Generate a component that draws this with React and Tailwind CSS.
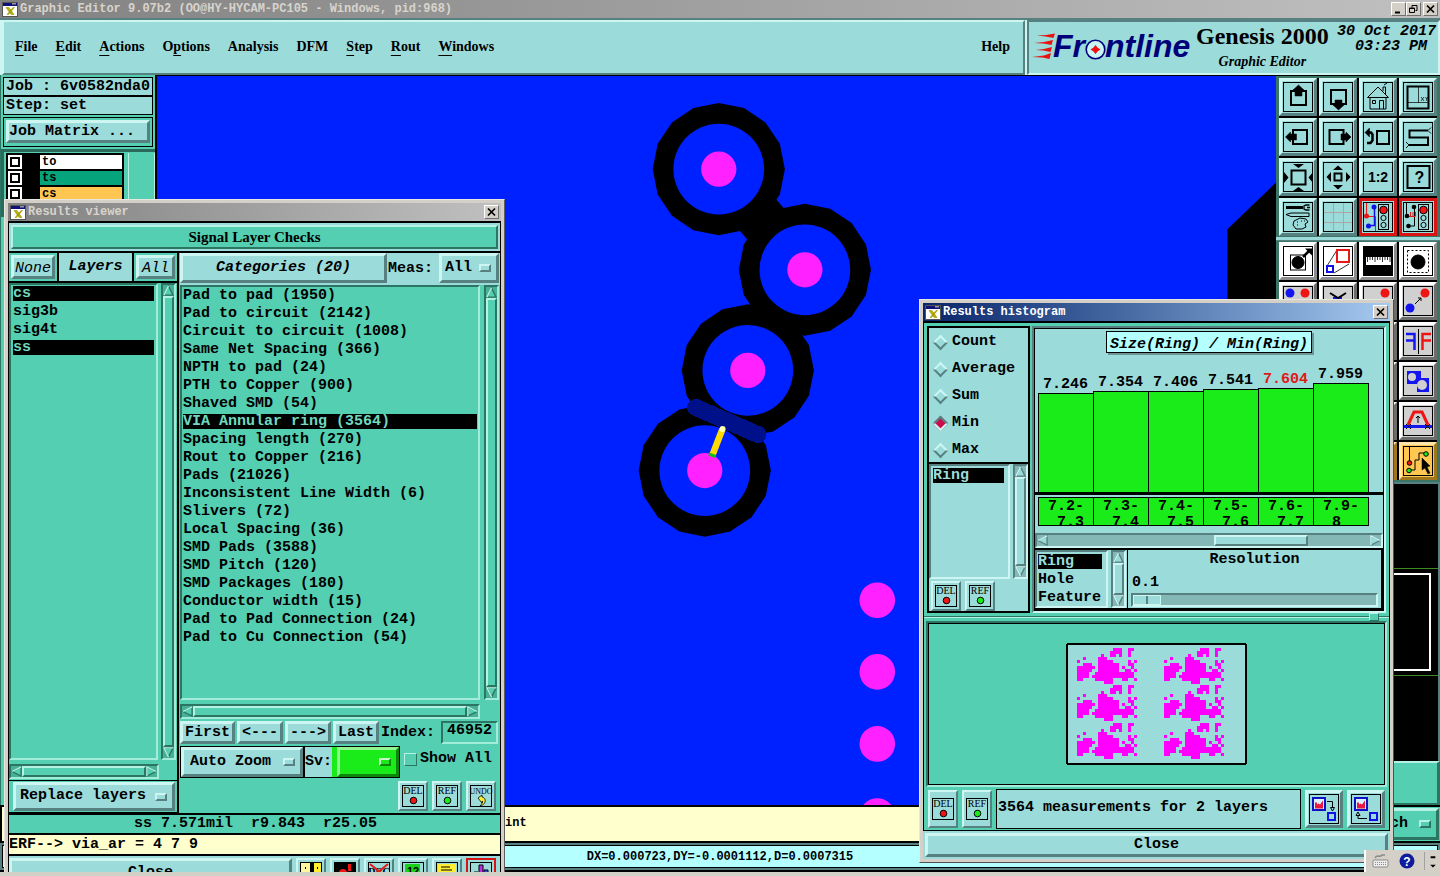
import clsx from "clsx";

const mono = "font-['Liberation_Mono',monospace]";
const serif = "font-['Liberation_Serif',serif]";

const cyanUp =
  "bg-[#9bdbda] border-t-[#cdf6f3] border-l-[#cdf6f3] border-r-[#568180] border-b-[#568180]";
const tealUp =
  "bg-[#54cfb1] border-t-[#b4f3e3] border-l-[#b4f3e3] border-r-[#2b7562] border-b-[#2b7562]";
const tealDown =
  "bg-[#54cfb1] border-t-[#2b7562] border-l-[#2b7562] border-r-[#a4ecda] border-b-[#a4ecda]";
const cyanDown =
  "bg-[#9bdbda] border-t-[#568180] border-l-[#568180] border-r-[#cdf6f3] border-b-[#cdf6f3]";
const greyUp =
  "bg-[#d4d0c8] border-t-white border-l-white border-r-[#707070] border-b-[#707070]";

const categories = [
  "Pad to pad (1950)",
  "Pad to circuit (2142)",
  "Circuit to circuit (1008)",
  "Same Net Spacing (366)",
  "NPTH to pad (24)",
  "PTH to Copper (900)",
  "Shaved SMD (54)",
  "VIA Annular ring (3564)",
  "Spacing length (270)",
  "Rout to Copper (216)",
  "Pads (21026)",
  "Inconsistent Line Width (6)",
  "Slivers (72)",
  "Local Spacing (36)",
  "SMD Pads (3588)",
  "SMD Pitch (120)",
  "SMD Packages (180)",
  "Conductor width (15)",
  "Pad to Pad Connection (24)",
  "Pad to Cu Connection (54)",
];

const bars = [
  { value: "7.246", height: 99, from: "7.2-", to: " 7.3" },
  { value: "7.354", height: 101, from: "7.3-", to: " 7.4" },
  { value: "7.406", height: 101, from: "7.4-", to: " 7.5" },
  { value: "7.541", height: 103, from: "7.5-", to: " 7.6" },
  { value: "7.604", height: 104, from: "7.6-", to: " 7.7", current: true },
  { value: "7.959", height: 109, from: "7.9-", to: " 8" },
];

function XIcon() {
  return (
    <svg viewBox="0 0 16 15" className="w-4 h-[15px] shrink-0">
      <rect width="16" height="15" fill="#555" />
      <rect x="1" y="1" width="14" height="3" fill="#10107a" />
      <rect x="10" y="1" width="4" height="1.5" fill="#999" />
      <rect x="1" y="4" width="14" height="10" fill="#fff" />
      <path d="M4 5.5h3l5 7H9zM11 5.5h1.5l-6 7H5z" fill="#b8b400" stroke="#8a8600" strokeWidth=".5" />
    </svg>
  );
}

function WinButton({ kind, label }) {
  return (
    <button
      aria-label={label}
      className={clsx("w-[15px] h-3.5 border flex items-center justify-center shrink-0", greyUp)}
    >
      <svg viewBox="0 0 11 10" className="w-[11px] h-2.5" fill="none" stroke="#000">
        {kind === "close" && <path d="M2 1.5l7 7M9 1.5l-7 7" strokeWidth="1.7" />}
        {kind === "min" && <path d="M2 8.5h5" strokeWidth="2" />}
        {kind === "max" && <path d="M4 3.5V1.5h5v5H7.500M4 1.5h5M1.500 4h5v4.500h-5zM1.500 4.500h5" />}
      </svg>
    </button>
  );
}

function TitleBar({ title, active }) {
  return (
    <div
      className={clsx(
        "h-[18px] flex items-center px-0.5 text-[12px] shrink-0",
        active
          ? "bg-linear-to-r from-[#0a246a] to-[#a6caf0] text-white"
          : "bg-linear-to-r from-[#828282] to-[#c0c0c0] text-[#d8d4cc]"
      )}
    >
      <XIcon />
      <span className="ml-0.5 flex-1">{title}</span>
      <WinButton kind="close" label={`Close ${title}`} />
    </div>
  );
}

function Arrow({ dir, tone }) {
  const light = tone === "teal" ? "#b4f3e3" : "#cdf6f3";
  const dark = tone === "teal" ? "#2b7562" : "#568180";
  const face = tone === "teal" ? "#54cfb1" : "#9bdbda";
  const shapes = {
    up: ["M6 1L1 11", "M1 11H11L6 1"],
    down: ["M11 1H1L6 11", "M6 11L11 1"],
    left: ["M11 1L1 6", "M1 6L11 11V1"],
    right: ["M1 11V1L11 6", "M11 6L1 11"],
  };
  return (
    <svg viewBox="0 0 12 12" className="w-[11px] h-[11px] shrink-0" fill="none" strokeWidth="1.5">
      <path d={shapes[dir][1] + "Z" + shapes[dir][0]} fill={face} stroke={dark} />
      <path d={shapes[dir][0]} stroke={light} />
    </svg>
  );
}

function ScrollBar({ horizontal, tone = "teal", thumb = "flex-1", lead = "" }) {
  const teal = tone === "teal";
  return (
    <div
      aria-hidden="true"
      className={clsx(
        "border-2 flex shrink-0",
        horizontal ? "h-[15px]" : "w-[15px] flex-col",
        teal
          ? "bg-[#47b197] border-t-[#2b7562] border-l-[#2b7562] border-r-[#a4ecda] border-b-[#a4ecda]"
          : "bg-[#84b8b7] border-t-[#568180] border-l-[#568180] border-r-[#cdf6f3] border-b-[#cdf6f3]"
      )}
    >
      <Arrow dir={horizontal ? "left" : "up"} tone={tone} />
      {lead && <div className={lead} />}
      <div className={clsx("border-2", thumb, teal ? tealUp : cyanUp)} />
      {lead && <div className="flex-1" />}
      <Arrow dir={horizontal ? "right" : "down"} tone={tone} />
    </div>
  );
}

function Menu({ label, value, className, tone = cyanUp, notch = cyanUp, pad = "pl-1" }) {
  return (
    <div className={clsx("relative", className)}>
      <select
        aria-label={label}
        className={clsx("appearance-none w-full h-full border-3 outline-none", pad, tone)}
      >
        <option>{value}</option>
      </select>
      <span
        className={clsx(
          "absolute right-2 top-1/2 -mt-1 w-3 h-2 border-2 pointer-events-none",
          notch
        )}
      />
    </div>
  );
}

function PushButton({ children, className }) {
  return <button className={clsx("border-3", cyanUp, className)}>{children}</button>;
}

function ListBox({ items, selected, label, className, tone = tealDown }) {
  return (
    <ul role="listbox" aria-label={label} className={clsx("border-2 overflow-hidden", tone, className)}>
      {items.map((item) => {
        const on = selected.includes(item);
        return (
          <li
            key={item}
            role="option"
            aria-selected={on}
            className={clsx(
              "leading-[15px] h-[15px] mb-[3px] whitespace-pre",
              on && (tone === tealDown ? "bg-black text-[#6fd8be]" : "bg-black text-[#9bdbda]")
            )}
          >
            {item}
          </li>
        );
      })}
    </ul>
  );
}

function ToolButton({ name, className = "h-[30px]" }) {
  return (
    <button
      aria-label={name}
      className={clsx("w-[30px] border-2 flex items-center justify-center shrink-0", cyanUp, className)}
    >
      <svg viewBox="0 0 24 24" className="w-6 h-6">
        <rect x="1.5" y="1.5" width="21" height="21" fill="none" stroke="#000" />
        <text
          x="12"
          y="10"
          textAnchor="middle"
          fontFamily="Liberation Serif"
          fontWeight="400"
          fontSize={name === "UNDO" ? 8 : 10}
        >
          {name}
        </text>
        {name === "UNDO" ? (
          <path d="M9 14l4-3v2c5 1 4 8-2 9 3-3 3-5 2-5v2z" fill="#ffee30" stroke="#000" strokeWidth=".8" />
        ) : (
          <circle cx="12.500" cy="16.500" r="3.300" stroke="#000" fill={name === "DEL" ? "#f01515" : "#1aec1a"} />
        )}
      </svg>
    </button>
  );
}

function Header() {
  const menus = ["File", "Edit", "Actions", "Options", "Analysis", "DFM", "Step", "Rout", "Windows"];
  const keyIndex = { Options: 1, Analysis: -1, DFM: -1 };
  return (
    <header className="flex h-[55px] shrink-0 bg-[#cdf6f3]">
      <nav className={clsx("flex-1 ml-0.5 border-2 flex items-center pl-[11px] pr-[13px] pb-0.5 gap-[18px] text-[14px]", serif, cyanUp)}>
        {menus.map((menu) => {
          const at = keyIndex[menu] ?? 0;
          return (
            <button key={menu}>
              {at < 0 ? (
                menu
              ) : (
                <>
                  {menu.slice(0, at)}
                  <span className="underline underline-offset-4">{menu[at]}</span>
                  {menu.slice(at + 1)}
                </>
              )}
            </button>
          );
        })}
        <button className="ml-auto">Help</button>
      </nav>
      <div className="w-[413px] ml-0.5 border-2 border-[#568180] border-r-[#cdf6f3] border-b-[#cdf6f3] bg-[#9bdbda] flex">
        <Logo />
        <div className={clsx("text-center shrink-0", serif)}>
          <h1 className="text-[24px] leading-7">Genesis 2000</h1>
          <p className="text-[14px] leading-6 italic">Graphic Editor</p>
        </div>
        <p className="text-[15px] leading-[15px] italic pt-0.5 pr-0.5 text-right flex-1 whitespace-nowrap">
          30 Oct 2017
          <br />
          03:23 PM&nbsp;
        </p>
      </div>
    </header>
  );
}

function Logo() {
  return (
    <svg viewBox="1029 22 167 50" className="w-[167px] h-[50px] shrink-0" role="img" aria-label="Frontline">
      <path
        d="M1037 35.500l9-.5 9-1.500-1.500 4.500-8-1.500zM1034 43l10-1 9-2-1.500 5-8-1.500zM1036 50l8-1 8-2-1.500 5-7-1.500zM1032 57l12-1.500 7-2.500-1.500 6-7-1.500z"
        fill="#e8130f"
      />
      <g fill="#00007b" fontFamily="Liberation Sans" fontSize="32" fontWeight="700" fontStyle="italic">
        <text x="1053" y="57">Fr</text>
        <text x="1105" y="57">ntline</text>
      </g>
      <circle cx="1095.500" cy="49.500" r="9.300" fill="#c8f4f4" stroke="#00007b" strokeWidth="1.600" />
      <path d="M1095.500 45l2 2.500 3 2-3 2-2 2.500-2-2.500-3-2 3-2z" fill="#f01010" />
    </svg>
  );
}

function JobPanel() {
  const layers = [
    ["to", "bg-white"],
    ["ts", "bg-[#05a47c]"],
    ["cs", "bg-[#ffc752]"],
  ];
  return (
    <aside className="w-[157px] shrink-0 bg-[#54cfb1] border-r-2 border-black border-l border-l-[#2b7562]">
      <div className="px-0.5 pt-0.5">
        <div className="border border-black bg-[#9bdbda] h-[19px] leading-[17px] px-0.5 whitespace-pre">
          Job : 6v0582nda0
        </div>
        <div className="border border-black bg-[#9bdbda] h-[19px] leading-[17px] px-0.5">Step: set</div>
        <div className="mt-0.5 border border-black p-0.5">
          <PushButton className="w-full h-[23px] leading-[17px] text-left">Job Matrix ...</PushButton>
        </div>
      </div>
      <div className="mt-0.5 border-t-3 border-l-3 border-[#2b6a5a] flex pt-px gap-1">
        <ul className="w-[118px] border-2 border-black bg-black ml-0.5 text-[12px]">
          {layers.map(([name, color]) => (
            <li key={name} className="flex h-4 pb-0.5">
              <label className="flex w-full gap-[18px]">
                <input
                  type="checkbox"
                  className="appearance-none w-3.5 h-3.5 bg-white border-2 border-white outline-2 -outline-offset-4 outline-black"
                />
                <span className={clsx("flex-1 leading-[14px] px-0.5", color)}>{name}</span>
              </label>
            </li>
          ))}
        </ul>
        <div className="flex-1 h-16 border-l border-r border-[#b4f3e3]" />
      </div>
    </aside>
  );
}

const vias = [
  [718, 169],
  [804, 269.5],
  [747, 370],
  [704, 470],
];

function polygon(cx, cy) {
  return Array.from({ length: 16 }, (_, i) => {
    const a = (i * Math.PI) / 8;
    return `${cx + 66 * Math.cos(a)},${cy + 66 * Math.sin(a)}`;
  }).join(" ");
}

function BoardCanvas() {
  return (
    <div className="flex-1 min-w-0 bg-[#0021ff] overflow-hidden border-t border-black">
      <svg viewBox="157 77 1119 728" preserveAspectRatio="xMinYMin slice" className="w-full h-full">
        <defs>
          <pattern id="hatch" width="2" height="2" patternUnits="userSpaceOnUse">
            <rect width="2" height="2" fill="#000018" />
            <rect width="1" height="1" fill="#0021ff" />
            <rect x="1" y="1" width="1" height="1" fill="#0021ff" />
          </pattern>
        </defs>
        <g transform="translate(-1 1)">
          <path d="M719 169L805 269.500L748 370L705 470" fill="none" stroke="#000" strokeWidth="48" />
          <g transform="translate(1 0)">
            {vias.map(([x, y]) => (
              <polygon key={y} points={polygon(x, y)} />
            ))}
            {vias.map(([x, y]) => (
              <g key={y}>
                <circle cx={x} cy={y} r="45.300" fill="#0021ff" />
                <circle cx={x} cy={y} r="17.600" fill="#ff21ff" />
              </g>
            ))}
            <g shapeRendering="crispEdges">
              <path d="M695 407L757 434" stroke="url(#hatch)" strokeWidth="17" strokeLinecap="round" />
            </g>
            <path d="M721.500 429L711.500 455" stroke="#ffdb00" strokeWidth="6.500" />
            <circle cx="721.800" cy="428.500" r="3" fill="#ffffb0" />
            <path d="M708 453.500l7 2.500" stroke="#18b818" strokeWidth="3" />
            {[599.5, 671, 743, 815].map((y) => (
              <circle key={y} cx="876.300" cy={y} r="17.800" fill="#ff21ff" />
            ))}
            <path d="M1226 229l51-49v624h-51z" />
          </g>
        </g>
      </svg>
    </div>
  );
}

/* glyphs are drawn in the 38px box of the button */
const viewIcons = {
  "Pan up": (
    <>
      <rect x="12" y="13" width="15" height="14" fill="none" strokeWidth="2" />
      <path d="M19.500 7L25 12h-2v6h-7v-6h-2z" fill="#000" strokeWidth=".5" />
    </>
  ),
  "Pan down": (
    <>
      <rect x="12" y="12" width="15" height="14" fill="none" strokeWidth="2" />
      <path d="M19.500 32L14 27h2v-5h7v5h2z" fill="#000" strokeWidth=".5" />
    </>
  ),
  Home: (
    <path d="M8.500 19.500L19 9l10.500 10.500zM11 19.500V31h16V19.500M20.500 31v-8.500h4V31M13.500 22.500h3v3h-3zM24 13V9h2.500v7M25 7l3-2" fill="none" />
  ),
  "Zoom XY": (
    <>
      <path d="M8.500 8.500h21v22h-21z" fill="none" strokeWidth="2" />
      <path d="M19.500 8v17M8 24.500h22M22 19l3 4m0-4l-3 4M26.500 19l1.200 2 1.300-2M27.700 21v2" fill="none" strokeWidth=".7" />
    </>
  ),
  "Pan left": (
    <>
      <rect x="14" y="12" width="14" height="14" fill="none" strokeWidth="2" />
      <path d="M6.500 19l5-5v2h6v6h-6v2z" fill="#000" strokeWidth=".5" />
    </>
  ),
  "Pan right": (
    <>
      <rect x="10.500" y="12" width="14" height="14" fill="none" strokeWidth="2" />
      <path d="M32 19l-5-5v2h-5v6h5v2z" fill="#000" strokeWidth=".5" />
    </>
  ),
  "Previous view": (
    <>
      <rect x="18" y="13" width="12" height="13" fill="none" strokeWidth="2" />
      <path d="M9 14.500h3l1.500 2v6l-2 2.500H8" fill="none" strokeWidth="2.500" />
      <path d="M6 14.500l4.500-4.500v9z" fill="#000" strokeWidth=".5" />
    </>
  ),
  "Serpentine pan": (
    <>
      <path d="M29 12.500H10.500v7H29V27H10" fill="none" strokeWidth="2" />
      <path d="M29 12.500l3-3M29 12.500l3 3M10 27l-3-3M10 27l-3 3" fill="none" strokeWidth=".9" />
    </>
  ),
  "Zoom in": (
    <>
      <rect x="12.500" y="12.500" width="14" height="14" fill="none" strokeWidth="2" />
      <path d="M14 6h11l-5.500 4zM14 33h11l-5.500-4zM5 14v11l4.500-5.500zM34 14v11l-4.500-5.500z" fill="#000" stroke="none" />
    </>
  ),
  "Zoom out": (
    <>
      <rect x="15.500" y="15.500" width="7" height="7" fill="none" strokeWidth="2" />
      <path d="M14 12h10l-5-4.500zM14 27h10l-5 4.500zM12 14v10l-4.500-5zM27 14v10l4.500-5z" fill="#000" stroke="none" />
    </>
  ),
  "Zoom 1:2": (
    <text x="19" y="24" textAnchor="middle" fontFamily="Liberation Sans" fontSize="14" stroke="none">
      1:2
    </text>
  ),
  "Area query": (
    <>
      <rect x="8.500" y="8" width="22" height="22" fill="none" strokeWidth="2" />
      <text x="20.500" y="25" textAnchor="middle" fontFamily="Liberation Sans" fontSize="16" stroke="none">
        ?
      </text>
    </>
  ),
  Tools: (
    <>
      <path d="M7 9.500h17" strokeWidth="3" />
      <path d="M30.500 7h-3.500l-2 1v3l2 1h3.500M28 9.500h3" fill="none" strokeWidth="1.300" />
      <path d="M7 16.500l5-1.500h18v3.500H12z" fill="none" />
      <path d="M15 23l6-3 6 1 2 3-3 2 1 3-4 2h-6l-3-4z" fill="none" />
      <path d="M18 24h1M22 23h1M25 23h1M18 27h1" />
    </>
  ),
  Grid: <path d="M14.500 5v28M24.500 5v28M5 14.500h28M5 24.500h28" stroke="#b0a4a4" fill="none" />,
  "Highlight nets": (
    <>
      <path d="M7.500 5v13.500h9V33" stroke="#e81818" fill="none" />
      <path d="M15.500 9v18.500H10" stroke="#1010e8" strokeWidth="1.500" fill="none" />
      <circle cx="7.500" cy="18" r="2.500" fill="#e81818" stroke="none" />
      <circle cx="15" cy="9" r="2.500" fill="#1010e8" stroke="none" />
      <circle cx="9.500" cy="28" r="2.500" fill="#1010e8" stroke="none" />
      <TrafficLight />
    </>
  ),
  "Check spacing": (
    <>
      <path d="M7.500 5v13M15.500 9v19H10" fill="none" />
      <path d="M10 18.500h6.500M11.500 18v-4M14 18v-4M16.500 18v-4" stroke="#e81818" />
      <circle cx="8" cy="18" r="2.300" stroke="none" />
      <circle cx="15" cy="9" r="2.300" stroke="none" />
      <circle cx="9.500" cy="28" r="2.300" stroke="none" />
      <TrafficLight />
    </>
  ),
};

function TrafficLight() {
  return (
    <g fill="none">
      <rect x="19.500" y="6.500" width="10" height="25" />
      <circle cx="24.500" cy="12" r="3.800" fill="#f01515" />
      <circle cx="24.500" cy="20" r="2.600" />
      <circle cx="24.500" cy="27" r="2.600" />
    </g>
  );
}

const editIcons = [
  <>
    <rect x="11.500" y="13" width="15" height="15" fill="none" />
    <circle cx="19" cy="20.500" r="6" />
    <path d="M24 15l6-6" strokeWidth="2.500" />
    <path d="M26 6.500h7v7z" stroke="none" />
  </>,
  <>
    <path d="M8 24L18 8M15 31l15-9" strokeWidth=".8" />
    <rect x="18" y="8" width="12" height="12" stroke="#e81818" strokeWidth="2" fill="none" />
    <rect x="8" y="24" width="6" height="6" stroke="#1010e8" strokeWidth="2" fill="none" />
  </>,
  <>
    <rect x="5" y="5" width="28" height="28" />
    <rect x="7" y="15" width="25" height="8" fill="#fff" stroke="none" />
    <path d="M8.500 15v5M11 15v3M13.500 15v3M16 15v5M18.500 15v3M21 15v3M23.500 15v5M26 15v3M28.500 15v3M31 15v5" strokeWidth=".8" />
  </>,
  <>
    <rect x="8.500" y="8.500" width="21" height="22" fill="none" strokeDasharray="2 2" />
    <circle cx="19" cy="20" r="7" />
  </>,
  <>
    <circle cx="11" cy="11" r="4.500" fill="#1515f0" stroke="none" />
    <circle cx="26" cy="11" r="4.500" fill="#f01515" stroke="none" />
  </>,
  <>
    <path d="M14 15h9v4h-9z" fill="#1515f0" stroke="none" />
    <path d="M11 11l8 5 8-5" strokeWidth="2" fill="none" />
  </>,
  <circle cx="26" cy="11" r="4.500" fill="#f01515" stroke="none" />,
  <>
    <circle cx="11" cy="26" r="4.500" fill="#1515f0" stroke="none" />
    <circle cx="26" cy="11" r="4.500" fill="#f01515" stroke="none" />
    <path d="M16 22l6-6M19 16h3v3" fill="none" />
  </>,
  null,
  null,
  null,
  <>
    <path d="M7 12h8.500v16M7 18.500h8" stroke="#1515f0" strokeWidth="2.500" fill="none" />
    <path d="M32 12h-8.500v16M32 18.500h-8" stroke="#f01515" strokeWidth="2.500" fill="none" />
    <path d="M19.500 7v25" />
  </>,
  null,
  null,
  null,
  <>
    <path d="M8 9h14v7h8v14H18v-8H8z" fill="#1515f0" stroke="none" />
    <circle cx="13" cy="15" r="4" fill="#d0d0d0" stroke="none" />
    <circle cx="23" cy="23" r="5" fill="#d0d0d0" stroke="none" />
  </>,
  null,
  null,
  null,
  <>
    <path d="M9 23l6-13h8l6 13" stroke="#f01515" strokeWidth="3" fill="none" />
    <path d="M5 24.500h28" stroke="#1515f0" strokeWidth="3" />
    <path d="M19 21v-7M17 16l2-2 2 2M7 22l5 5M12 22l-5 5M26 22l5 5M31 22l-5 5" fill="none" />
  </>,
  null,
  null,
  null,
  <>
    <path d="M10.500 5v16M10 28h6V18h4v-7h7" fill="none" />
    <circle cx="10.500" cy="21" r="2.300" fill="#f01515" />
    <circle cx="27" cy="12" r="2.300" fill="#1aec1a" />
    <circle cx="10" cy="28.500" r="2.300" fill="#1aec1a" />
    <path d="M23 16v12l3-2 3 6 2-1-3-6 3-1z" strokeWidth=".5" />
  </>,
];

function GridButton({ label, className, children }) {
  return (
    <button aria-label={label} className={clsx("w-[38px] h-[38px] border-3", className)}>
      <svg viewBox="3 3 32 32" className="w-8 h-8" stroke="#000" strokeWidth="1">
        <rect x="4.500" y="4.500" width="29" height="29" fill="none" />
        {children}
      </svg>
    </button>
  );
}

function ToolPanel() {
  const greyBevel = "border-t-white border-l-white border-r-[#6c6c6c] border-b-[#6c6c6c]";
  return (
    <aside className="w-[164px] shrink-0 bg-[#3b7566] flex flex-col border-t border-black">
      <div className="px-[3px] pt-0.5">
        <div className="grid grid-cols-4 gap-0.5 bg-black">
          {Object.entries(viewIcons).map(([label, icon]) => {
            const alert = label === "Highlight nets" || label === "Check spacing";
            return (
              <GridButton
                key={label}
                label={label}
                className={alert ? "bg-[#9bdbda] border-[#d81414]" : cyanUp}
              >
                {icon}
              </GridButton>
            );
          })}
        </div>
      </div>
      <div className="h-1 my-px bg-[#9bdbda] border-b border-[#568180]" />
      <div className="px-[3px]">
        <div className="grid grid-cols-4 gap-0.5 bg-black">
          {editIcons.map((icon, i) => (
            <GridButton
              key={i}
              label={`Edit tool ${i + 1}`}
              className={clsx(
                i < 4 && "bg-white border-t-white border-l-white border-r-[#8c8c8c] border-b-[#8c8c8c]",
                i >= 4 && i < 20 && ["bg-[#d0d0d0]", greyBevel],
                i >= 20 && "bg-[#ffc752] border-t-[#ffe6a8] border-l-[#ffe6a8] border-r-[#a0761c] border-b-[#a0761c]"
              )}
            >
              {icon}
            </GridButton>
          ))}
        </div>
      </div>
      <div className="flex-1 mt-0.5 bg-black border-t-2 border-r-2 border-[#568180]">
        <svg viewBox="1276 485 162 276" preserveAspectRatio="xMaxYMin meet" className="w-full h-full" fill="none">
          <path d="M1276 569.500h162M1276 676.500h162" stroke="#3f8a1e" />
          <path d="M1276 575h154v96h-154" stroke="#fff" strokeWidth="2" />
        </svg>
      </div>
      <div className={clsx("h-[44px] border-2 border-r-3", tealUp)} />
      <div className="h-[38px] bg-[#54cfb1] border-y-2 border-black p-px">
        <Menu label="Units" value="Inch" tone={tealUp} pad="pl-[92px]" notch={tealUp} className="h-full" />
      </div>
    </aside>
  );
}

const footerIcons = [
  <>
    <path d="M2 2h9v9H2z" fill="#fff6a0" />
    <path d="M6 6h1v2H6zM11 2h4v20h-4z" />
    <path d="M15 2h7v12h-7z" fill="#ffee30" />
    <path d="M18 6h1v2h-1z" />
  </>,
  <>
    <path d="M2 2h20v20H2z" />
    <circle cx="10" cy="12" r="4" fill="#f01515" />
    <path d="M15 3h3v7h-3z" fill="#f01515" />
  </>,
  <>
    <text x="12" y="14" fontSize="10" textAnchor="middle" fontFamily="Liberation Serif" fontWeight="700">
      DRC
    </text>
    <path d="M3 3l16 13M21 3L5 16" stroke="#e81818" strokeWidth="2" />
  </>,
  <>
    <path d="M4 3h15v19H4z" fill="#1ad01a" />
    <text x="12" y="14" fontSize="11" textAnchor="middle" fontFamily="Liberation Sans" fontWeight="700">
      12
    </text>
  </>,
  <>
    <path d="M3 3h18v19H3z" fill="#ffee30" />
    <path d="M6 6h9M6 9h11M6 12h7M6 15h8" stroke="#000" />
  </>,
  <g stroke="#000">
    <path d="M5 11h4v11H5z" fill="#1aec1a" />
    <path d="M10 4h4v18h-4z" fill="#c030e0" />
    <path d="M15 9h4v13h-4z" fill="#4050f0" />
  </g>,
];

function FooterIcon({ index, children }) {
  return (
    <button
      aria-label={`Viewer option ${index + 1}`}
      className={clsx(
        "w-[30px] h-[30px] border-2 flex items-center justify-center",
        index === 5 ? "bg-[#9bdbda] border-[#d81414]" : cyanUp
      )}
    >
      <svg viewBox="0 0 24 24" className="w-6 h-6" stroke="none">
        {children}
        <rect x="1.500" y="1.500" width="21" height="21" fill="none" stroke="#000" />
      </svg>
    </button>
  );
}

function ResultsViewer() {
  return (
    <section className="absolute left-1 top-[199px] bottom-1 w-[501px] overflow-hidden bg-[#d4d0c8] border border-b-0 border-[#e8e6e0] border-r-[#606060] p-[3px]">
      <TitleBar title="Results viewer" />
      <div className="border-x border-t-2 border-black bg-[#54cfb1]">
        <div className="bg-[#9bdbda] p-0.5 border-b-2 border-black">
          <h2 className={clsx("h-6 border-2 text-center text-[15px] leading-5", serif, tealUp)}>
            Signal Layer Checks
          </h2>
        </div>
        <div className="flex">
          <div className="w-[170px] flex flex-col border-r-2 border-black">
            <div className="flex h-[30px] border-b-2 border-black">
              <div className="p-0.5">
                <PushButton className="h-full px-px italic font-normal border-2">None</PushButton>
              </div>
              <div className="flex-1 bg-[#9bdbda] italic text-center leading-7 border-x-2 border-black">Layers</div>
              <div className="p-0.5">
                <PushButton className="h-full px-[3px] italic font-normal border-2">All</PushButton>
              </div>
            </div>
            <div className="flex gap-[3px] flex-1 pr-px">
              <ListBox
                label="Layers"
                items={["cs", "sig3b", "sig4t", "ss"]}
                selected={["cs", "ss"]}
                className="flex-1 pt-px px-0.5"
              />
              <ScrollBar />
            </div>
            <div className="mt-1 mr-[18px]">
              <ScrollBar horizontal />
            </div>
            <div className="mt-px h-[33px] border-y border-black pl-1 py-px pr-0.5">
              <Menu label="Layer mode" value="Replace layers" className="h-full" />
            </div>
          </div>
          <div className="flex-1 min-w-0 pl-px">
            <div className="flex h-8 bg-[#9bdbda]">
              <PushButton className="w-[207px] h-[30px] italic">Categories (20)</PushButton>
              <label className="flex-1 leading-8 pl-px">Meas:</label>
              <Menu label="Measurements" value="All" pad="pl-[3px]" className="w-[60px] h-[30px] mr-px" />
            </div>
            <div className="flex h-[415px] gap-1 pr-px">
              <ListBox
                label="Categories"
                items={categories}
                selected={["VIA Annular ring (3564)"]}
                className="flex-1 pt-px pl-px pr-px"
              />
              <ScrollBar />
            </div>
            <div className="mt-1 mr-5">
              <ScrollBar horizontal />
            </div>
            <div className="flex gap-0.5 h-[27px] pt-0.5 pr-0.5 items-start">
              {["First", "<---", "--->", "Last"].map((label) => (
                <PushButton
                  key={label}
                  className="h-[23px] leading-[17px] px-0.5 border-2 whitespace-nowrap shrink-0"
                >
                  {label}
                </PushButton>
              ))}
              <label htmlFor="index" className="leading-[23px] flex-1">
                Index:
              </label>
              <input
                id="index"
                defaultValue="46952"
                className={clsx("w-[57px] h-[23px] border-2 pl-1 pb-1 outline-none", tealDown)}
              />
            </div>
            <div className="flex">
              <div className="flex h-8 border border-black">
                <Menu label="Zoom mode" value="Auto Zoom" pad="pl-1.5" className="w-[122px]" />
                <span className="bg-[#9bdbda] border-l-2 border-black leading-[30px]">Sv:</span>
                <div className="bg-[#1aec1a] pl-[5px]">
                  <Menu
                    label="Sv color"
                    value=""
                    className="w-[62px] h-full"
                    tone="bg-[#1aec1a] border-t-[#8ff58f] border-l-[#8ff58f] border-r-[#0e860e] border-b-[#0e860e]"
                    notch="bg-[#1aec1a] border-t-[#c8fac8] border-l-[#c8fac8] border-r-[#0e860e] border-b-[#0e860e]"
                  />
                </div>
              </div>
              <label className="flex items-center h-[27px] ml-1 gap-[3px]">
                <input type="checkbox" className={clsx("appearance-none w-[13px] h-[13px] border", tealUp)} />
                Show All
              </label>
            </div>
            <div className="flex justify-end gap-1 mt-[3px] h-[32px] pr-1">
              <ToolButton name="DEL" />
              <ToolButton name="REF" />
              <ToolButton name="UNDO" />
            </div>
          </div>
        </div>
        <div className="border-t-2 border-b-2 border-black h-[22px] leading-[18px] pl-[125px] whitespace-pre">
          ss 7.571mil  r9.843  r25.05
        </div>
        <div className="border-b-2 border-black bg-[#ffffce] h-[21px] leading-[19px]">
          ERF--&gt; via_ar = 4 7 9
        </div>
        <div className="bg-[#9bdbda] flex gap-1 pt-0.5 pr-1">
          <PushButton className="flex-1 h-[30px] border-2">Close</PushButton>
          {footerIcons.map((icon, i) => (
            <FooterIcon key={i} index={i}>
              {icon}
            </FooterIcon>
          ))}
        </div>
      </div>
    </section>
  );
}

const clusterRows = [
  "            ###  ##  ",
  "           ####  #   ",
  "        #  ## #  #   ",
  "  #    ###           ",
  "#      #####     # # ",
  "  ###  #######   ##  ",
  "###### ####### #  #  ",
  "#####  #######  ## # ",
  "####  #############  ",
  "#### ##############  ",
  "##    ######   ##  # ",
  "         ###         ",
];

function Cluster({ x, y }) {
  const cells = clusterRows.flatMap((row, r) =>
    [...row].map((c, i) => (c === "#" ? `M${x + i * 3} ${y + r * 3}h3v3h-3z` : "")).filter(Boolean)
  );
  return <path d={cells.join("")} fill="#ff00ff" />;
}

function BoardMap() {
  return (
    <svg viewBox="0 0 181 122" className="w-[181px] h-[122px]" shapeRendering="crispEdges">
      <rect x="1" y="1" width="179" height="120" rx="2" fill="#9bdbda" stroke="#000" strokeWidth="2" />
      {[5, 42, 80].map((y) => (
        <g key={y}>
          <Cluster x={11} y={y} />
          <Cluster x={98} y={y} />
        </g>
      ))}
    </svg>
  );
}

function ExportButton({ label, back }) {
  return (
    <button aria-label={label} className={clsx("w-[38px] h-[38px] border-3", cyanUp)}>
      <svg viewBox="3 3 32 32" className="w-8 h-8" fill="none">
        <rect x="4.500" y="4.500" width="29" height="29" stroke="#000" />
        <rect x="8" y="8" width="12" height="12" fill="#d8f0ff" stroke="#1010c8" strokeWidth="2" />
        <path d="M10 18.500v-6h2v2l1.500-1 1.500 1 3-4v8z" fill="#e81840" />
        <rect x="23" y="23" width="7" height="7" stroke="#1010e8" strokeWidth="2" />
        {back ? (
          <path d="M20 28.500h-9V25M11 22l-2 3.500h4z" stroke="#000" />
        ) : (
          <path d="M22 11.500h5.500V18M27.500 21l-2-3.500h4z" stroke="#000" />
        )}
      </svg>
    </button>
  );
}

function Histogram() {
  return (
    <div className="h-[204px] flex flex-col items-start">
      <h3 className="self-center mt-0.5 h-[22px] leading-[25px] px-[3px] border border-black bg-[#b4ffff] italic shadow-[2px_2px_0_#6b9695]">
        Size(Ring) / Min(Ring)
      </h3>
      <div className="flex-1 flex items-end pl-[3px] self-stretch border-b-3 border-black">
        {bars.map((bar) => (
          <div key={bar.value} className="w-[55px]">
            <div className={clsx("leading-4 text-center", bar.current && "text-[#e01818]")}>{bar.value}</div>
            <div className="bg-[#1aec1a] border-t border-l border-black" style={{ height: bar.height }} />
          </div>
        ))}
        <div className="border-l border-black h-[109px]" />
      </div>
      <div className="flex ml-[3px] mt-0.5 mb-[7px] h-[29px] border border-l-0 border-black">
        {bars.map((bar) => (
          <div key={bar.value} className="w-[55px] bg-[#1aec1a] border-l border-black pl-[9px] pt-px leading-4 whitespace-pre">
            {bar.from + "\n" + bar.to}
          </div>
        ))}
      </div>
    </div>
  );
}

function ResultsHistogram() {
  return (
    <section className="absolute left-[919px] top-[299px] w-[475px] bg-[#d4d0c8] border border-[#e8e6e0] border-r-[#505050] border-b-[#505050] p-[3px]">
      <TitleBar title="Results histogram" active />
      <div className="border border-t-2 border-black bg-[#54cfb1]">
        <div className="flex pt-[3px] px-[3px] gap-0.5">
          <div className="w-[103px] border-2 border-black bg-[#9bdbda] flex flex-col">
            <fieldset className="h-[136px] pl-1.5 pt-px border-b-2 border-black">
              {["Count", "Average", "Sum", "Min", "Max"].map((name) => (
                <label key={name} className="flex items-center h-[27px] gap-1.5">
                  <input
                    type="radio"
                    name="stat"
                    defaultChecked={name === "Min"}
                    className="appearance-none w-[11px] h-[11px] rotate-45 border-2 border-[#568180] border-t-[#cdf6f3] border-l-[#cdf6f3] checked:bg-[#cc0a4c] checked:border-[#cdf6f3] checked:border-t-[#568180] checked:border-l-[#568180]"
                  />
                  {name}
                </label>
              ))}
            </fieldset>
            <div className="flex h-[115px] gap-[3px]">
              <ListBox
                label="Measure"
                items={["Ring"]}
                selected={["Ring"]}
                tone={cyanDown}
                className="flex-1 pt-0.5 pl-0.5 pr-1"
              />
              <ScrollBar tone="cyan" />
            </div>
            <div className="flex gap-1 pt-0.5 pl-0.5">
              <ToolButton name="DEL" />
              <ToolButton name="REF" />
            </div>
          </div>
          <div className="flex-1 min-w-0 border-2 border-[#568180] border-r-[#cdf6f3] border-b-[#cdf6f3] bg-[#9bdbda]">
            <div className="border border-black">
              <Histogram />
              <ScrollBar horizontal tone="cyan" lead="w-[166px]" thumb="w-[94px]" />
              <div className="flex h-[62px] border-t-2 border-b-2 border-r-2 border-black">
                <ListBox
                  label="Parameter"
                  items={["Ring", "Hole", "Feature"]}
                  selected={["Ring"]}
                  tone={cyanDown}
                  className="w-[73px] pt-0.5 pl-px pr-1"
                />
                <div className="flex pl-[3px] pr-px border-r border-black">
                  <ScrollBar tone="cyan" />
                </div>
                <div className="flex-1 px-[3px]">
                  <label htmlFor="resolution" className="block text-center h-[22px] leading-5">
                    Resolution
                  </label>
                  <div className="leading-[22px] pl-px h-[21px]">0.1</div>
                  <input
                    id="resolution"
                    type="range"
                    defaultValue="0"
                    className="block appearance-none w-full h-3.5 border-2 bg-[#84b8b7] border-t-[#568180] border-l-[#568180] border-r-[#cdf6f3] border-b-[#cdf6f3] [&::-webkit-slider-thumb]:appearance-none [&::-webkit-slider-thumb]:w-7 [&::-webkit-slider-thumb]:h-2.5 [&::-webkit-slider-thumb]:border [&::-webkit-slider-thumb]:border-[#cdf6f3] [&::-webkit-slider-thumb]:bg-[linear-gradient(90deg,#9bdbda_46%,#568180_46%,#568180_52%,#9bdbda_52%)]"
                  />
                </div>
              </div>
            </div>
          </div>
        </div>
        <div className="h-[8px] flex items-center">
          <div className="flex-1 border-t border-t-[#2b7562] border-b border-b-[#b4f3e3]" />
          <div className={clsx("w-2.5 h-2 border", tealUp)} />
          <div className="w-2.5 border-t border-t-[#2b7562] border-b border-b-[#b4f3e3]" />
        </div>
        <div className={clsx("mx-0.5 border-2", tealDown)}>
          <div className="border border-black h-[162px] flex justify-center items-center">
            <BoardMap />
          </div>
        </div>
        <div className="flex gap-1 px-1 items-center h-[43px]">
          <ToolButton name="DEL" className="h-[38px]" />
          <ToolButton name="REF" className="h-[38px]" />
          <output className="flex-1 h-10 border border-black bg-[#9bdbda] leading-[36px] pl-px">
            3564 measurements for 2 layers
          </output>
          <ExportButton label="Export plot" />
          <ExportButton label="Import plot" back />
        </div>
      </div>
      <div className="bg-[#9bdbda] p-0.5">
        <PushButton className="w-full h-6 leading-[18px]">Close</PushButton>
      </div>
    </section>
  );
}

function Tray() {
  return (
    <div className="absolute right-0 bottom-1 w-[76px] h-[22px] bg-[#d4d0c8] border-l-2 border-white flex items-center justify-between pl-1.5">
      <svg viewBox="0 0 18 16" className="w-[18px] h-4" fill="none" stroke="#8a8a86">
        <path d="M3 5c2-4 5 0 7-3l3 0" strokeWidth="1.500" />
        <rect x="1" y="7" width="15" height="7" rx="1" fill="#eee" />
        <path d="M3 9.500h11M3 11.500h11" strokeDasharray="1 1" />
      </svg>
      <svg viewBox="0 0 16 16" className="w-4 h-4">
        <circle cx="8" cy="8" r="7.500" fill="#0c1c9c" />
        <text x="8" y="12.500" textAnchor="middle" fontFamily="Liberation Sans" fontSize="12" fill="#fff">
          ?
        </text>
      </svg>
      <svg viewBox="0 0 16 18" className="w-4 h-[18px] border-l border-[#a0a0a0]">
        <path d="M6 4h5v2H6zM5.500 13h6l-3 3z" />
      </svg>
    </div>
  );
}

export default function App() {
  return (
    <div className={clsx("relative h-screen w-full overflow-hidden flex flex-col font-bold text-[15px] text-black bg-[#d4d0c8]", mono)}>
      <div className="h-5 shrink-0 flex items-center px-0.5 text-[12px] text-[#d8d4cc] bg-linear-to-r from-[#828282] to-[#c0c0c0] border-b-2 border-[#568180]">
        <XIcon />
        <span className="flex-1 ml-0.5">Graphic Editor 9.07b2 (OO@HY-HYCAM-PC105 - Windows, pid:968)</span>
        <WinButton kind="min" label="Minimize" />
        <WinButton kind="max" label="Restore" />
        <span className="w-0.5" />
        <WinButton kind="close" label="Close" />
      </div>
      <Header />
      <main className="flex-1 min-h-0 flex">
        <div className="flex-1 min-w-0 flex flex-col">
          <div className="flex-1 min-h-0 flex">
            <JobPanel />
            <BoardCanvas />
          </div>
          <div className="h-[38px] border-2 border-black bg-[#ffffce] text-[12px] leading-8 pl-[503px]">int</div>
        </div>
        <ToolPanel />
      </main>
      <footer className="shrink-0 bg-[#568180] border-b-2 border-black p-0.5 h-[29px]">
        <div className="h-full bg-[#b4ffff] border border-black text-[12px] leading-[22px] text-center">
          DX=0.000723,DY=-0.0001112,D=0.0007315
        </div>
      </footer>
      <div className="h-1 shrink-0 bg-[#d4d0c8]" />
      <ResultsViewer />
      <ResultsHistogram />
      <Tray />
    </div>
  );
}
